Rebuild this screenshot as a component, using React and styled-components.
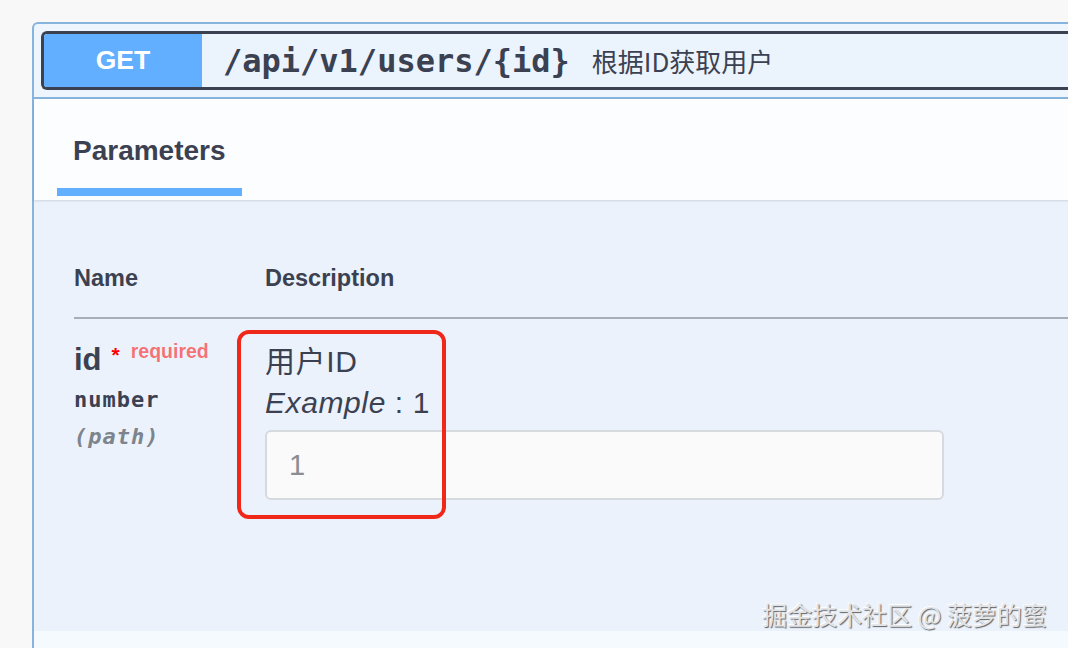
import styled, { createGlobalStyle } from 'styled-components'

const GlobalStyle = createGlobalStyle`
    html, body {
        margin: 0;
        padding: 0;
        background: #f8f8f8;
        overflow: hidden;
    }

    body {
        font-family: "Liberation Sans", "Noto Sans CJK SC", sans-serif;
        color: #3b4151;
    }
`

const Page = styled.div`
    width: 1068px;
    height: 648px;
    padding: 22px 0 0 32px;
    box-sizing: border-box;
    position: relative;
    overflow: hidden;
`

const Opblock = styled.div`
    width: 1080px;
    border: 2px solid #86b4dc;
    border-right: none;
    border-radius: 6px 0 0 0;
    background: #eef5fc;
`

const SummaryWrap = styled.div`
    padding: 7px 0 7px 7px;
    border-bottom: 2px solid #86b4dc;
`

const Summary = styled.div`
    display: flex;
    align-items: center;
    height: 59px;
    box-sizing: border-box;
    border: 3px solid #3b4151;
    border-right: none;
    border-radius: 6px 0 0 6px;
    background: #ebf3fd;
`

const Method = styled.div`
    width: 158px;
    height: 53px;
    display: flex;
    align-items: center;
    justify-content: center;
    background: #61affe;
    border-radius: 3px 0 0 3px;
    color: #fff;
    font-weight: bold;
    font-size: 26.5px;
`

const Path = styled.span`
    margin-left: 21px;
    font-family: "DejaVu Sans Mono", monospace;
    font-weight: bold;
    font-size: 32px;
    color: #3b4151;
`

const SummaryDesc = styled.span`
    margin-left: 22px;
    font-family: "Noto Sans CJK SC", sans-serif;
    font-size: 26px;
    color: #3b4151;
`

const TabHeader = styled.div`
    display: flex;
    padding: 0 0 4px 23px;
    background: #fbfdff;
    box-shadow: 0 1px 2px rgba(0, 0, 0, 0.12);
    position: relative;
`

const Tab = styled.div`
    padding: 36px 16px 21px;
    border-bottom: 8px solid #61affe;
    font-weight: bold;
    font-size: 28px;
    line-height: 32px;
    color: #3b4151;
`

const Params = styled.div`
    height: 431px;
    box-sizing: border-box;
    padding: 64px 0 0 40px;
    background: #ebf2fb;
`

const HeadRow = styled.div`
    display: flex;
    padding-bottom: 25px;
    border-bottom: 2px solid #a9aeb6;
`

const HeadCell = styled.div`
    width: ${props => props.width || 'auto'};
    font-weight: bold;
    font-size: 23.5px;
    line-height: 28px;
    color: #3b4151;
`

const Row = styled.div`
    display: flex;
`

const NameCell = styled.div`
    width: 191px;
    padding-top: 23px;
`

const ParamName = styled.div`
    font-weight: bold;
    font-size: 31px;
    line-height: 36px;
    color: #3b4151;
`

const Star = styled.span`
    position: relative;
    top: -8px;
    margin-left: 10px;
    font-size: 21px;
    color: #f00;
`

const Required = styled.span`
    position: relative;
    top: -12px;
    margin-left: 11px;
    font-size: 19.5px;
    color: rgba(255, 0, 0, 0.55);
`

const Mono = styled.div`
    font-family: "DejaVu Sans Mono", monospace;
    font-weight: bold;
    font-size: 22px;
    letter-spacing: 1px;
    line-height: 37px;
    color: ${props => props.muted ? '#7d848c' : '#3b4151'};
    font-style: ${props => props.muted ? 'italic' : 'normal'};
`

const DescCell = styled.div`
    position: relative;
    padding-top: 22px;
`

const DescLine = styled.div`
    font-size: 30px;
    letter-spacing: 0.6px;
    line-height: 41px;
    color: #3b4151;

    em {
        font-style: italic;
    }
`

const Input = styled.div`
    margin-top: 7px;
    width: 679px;
    height: 70px;
    box-sizing: border-box;
    display: flex;
    align-items: center;
    padding-left: 22px;
    background: #fafafa;
    border: 2px solid #d6d9dd;
    border-radius: 6px;
    font-size: 29px;
    color: #8a8d91;
`

const Highlight = styled.div`
    position: absolute;
    left: -28px;
    top: 11px;
    width: 209px;
    height: 189px;
    box-sizing: border-box;
    border: 4px solid #f0281a;
    border-radius: 12px;
    pointer-events: none;
`

const Footer = styled.div`
    height: 40px;
    background: #f5fafe;
`

const Watermark = styled.div`
    position: absolute;
    right: 21px;
    top: 597px;
    font-family: "Noto Sans CJK SC", sans-serif;
    font-size: 25px;
    line-height: 34px;
    color: #e2e4e8;
    text-shadow: 1px 1px 1px rgba(0, 0, 0, 0.6), -1px -1px 0 rgba(255, 255, 255, 0.9);
`

const App = () => {
    return (
        <>
            <GlobalStyle />
            <Page>
                <Opblock>
                    <SummaryWrap>
                        <Summary>
                            <Method>GET</Method>
                            <Path>/api/v1/users/{'{id}'}</Path>
                            <SummaryDesc>根据ID获取用户</SummaryDesc>
                        </Summary>
                    </SummaryWrap>

                    <TabHeader>
                        <Tab>Parameters</Tab>
                    </TabHeader>

                    <Params>
                        <HeadRow>
                            <HeadCell width="191px">Name</HeadCell>
                            <HeadCell>Description</HeadCell>
                        </HeadRow>

                        <Row>
                            <NameCell>
                                <ParamName>
                                    id
                                    <Star>*</Star>
                                    <Required>required</Required>
                                </ParamName>
                                <Mono>number</Mono>
                                <Mono muted>(path)</Mono>
                            </NameCell>

                            <DescCell>
                                <DescLine>用户ID</DescLine>
                                <DescLine><em>Example</em> : 1</DescLine>
                                <Input>1</Input>
                                <Highlight />
                            </DescCell>
                        </Row>
                    </Params>

                    <Footer />
                </Opblock>

                <Watermark>掘金技术社区 @ 菠萝的蜜</Watermark>
            </Page>
        </>
    )
}

export default App
